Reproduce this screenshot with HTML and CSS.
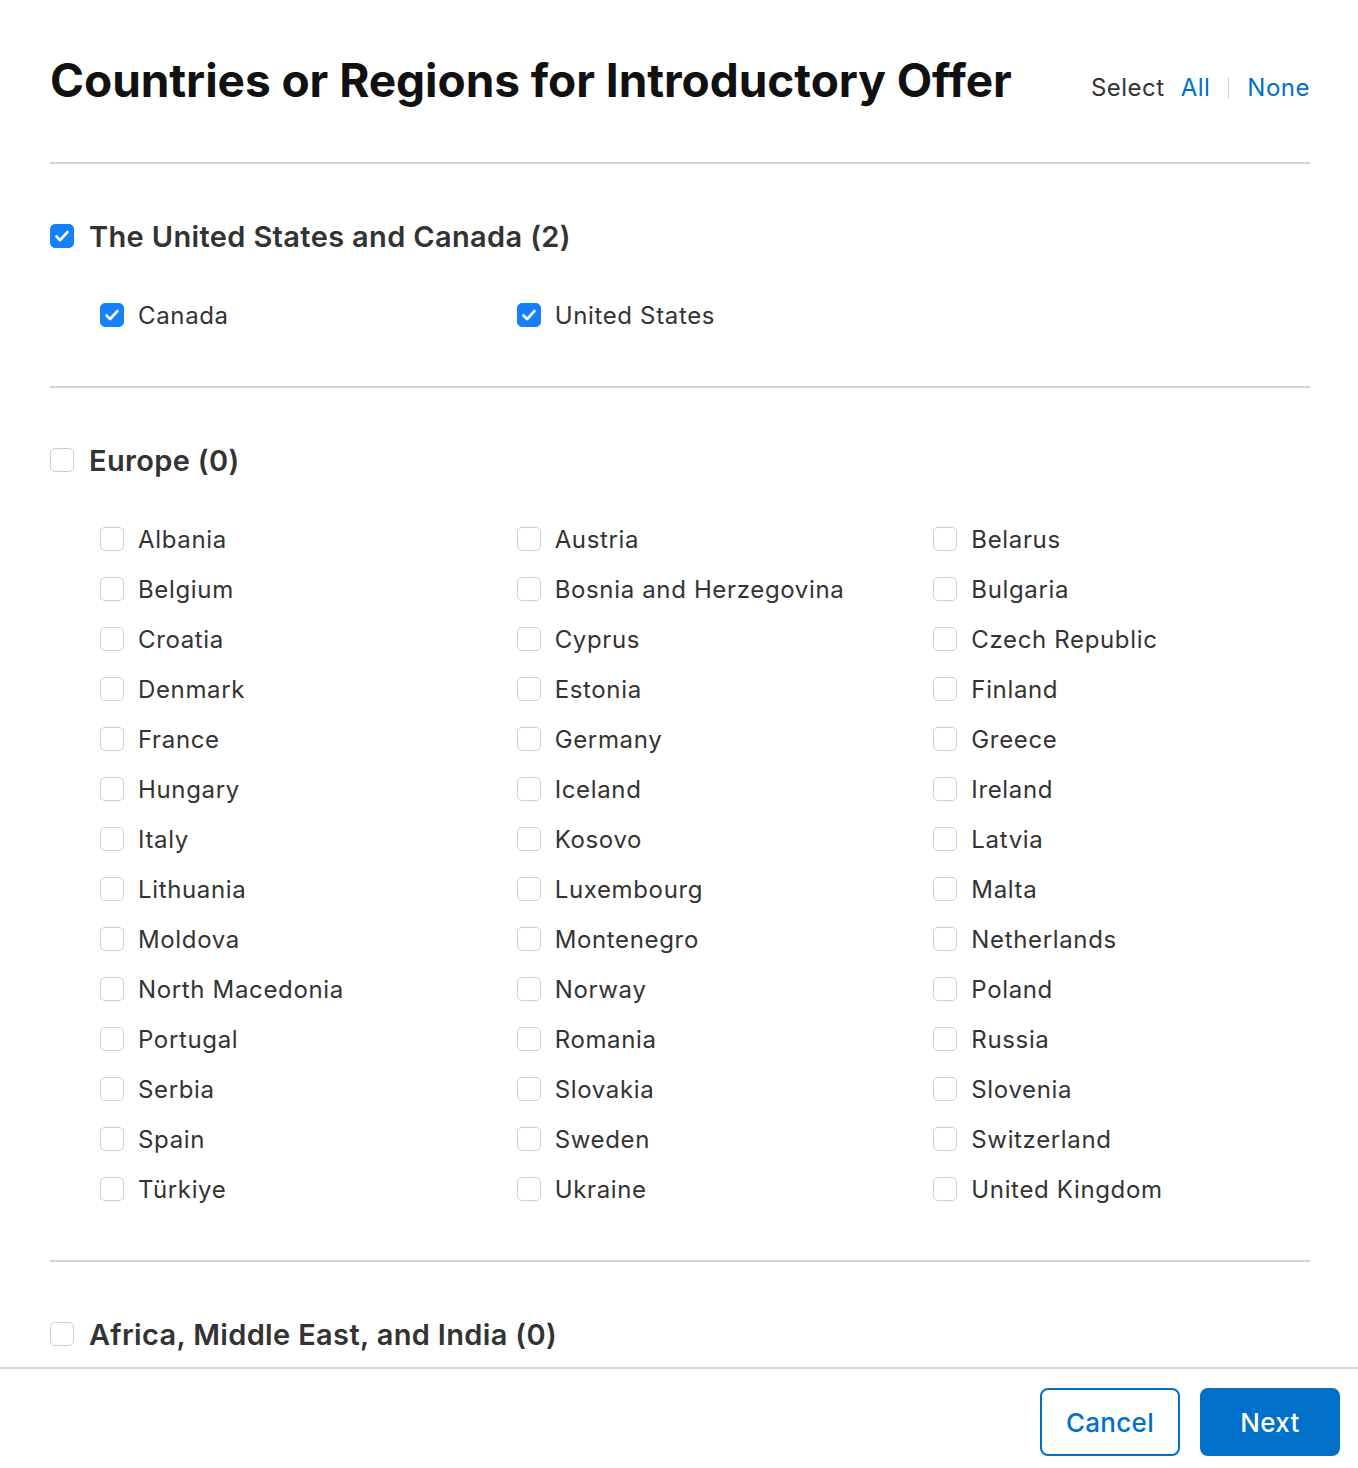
FILE: index.html
```html
<!DOCTYPE html>
<html>
<head>
<meta charset="utf-8">
<link rel="stylesheet" href="styles.css">
</head>
<body>
<div class="modal">
  <div class="scroll">
    <header class="head">
      <h1 class="title">Countries or Regions for Introductory Offer</h1>
      <div class="select">
        <span class="select-label">Select</span>
        <a class="link">All</a>
        <span class="sep"></span>
        <a class="link">None</a>
      </div>
    </header>

    <section class="group">
      <label class="group-head"><span class="cb on"><svg viewBox="0 0 24 24"><path d="M6 12.6l3.9 3.9 8-8.8" fill="none" stroke="#fff" stroke-width="3" stroke-linecap="round" stroke-linejoin="round"/></svg></span>The United States and Canada (2)</label>
      <div class="items">
        <label class="item"><span class="cb on"><svg viewBox="0 0 24 24"><path d="M6 12.6l3.9 3.9 8-8.8" fill="none" stroke="#fff" stroke-width="3" stroke-linecap="round" stroke-linejoin="round"/></svg></span>Canada</label>
        <label class="item"><span class="cb on"><svg viewBox="0 0 24 24"><path d="M6 12.6l3.9 3.9 8-8.8" fill="none" stroke="#fff" stroke-width="3" stroke-linecap="round" stroke-linejoin="round"/></svg></span>United States</label>
      </div>
    </section>

    <section class="group">
      <label class="group-head"><span class="cb"></span>Europe (0)</label>
      <div class="items">
        <label class="item"><span class="cb"></span>Albania</label>
        <label class="item"><span class="cb"></span>Austria</label>
        <label class="item"><span class="cb"></span>Belarus</label>
        <label class="item"><span class="cb"></span>Belgium</label>
        <label class="item"><span class="cb"></span>Bosnia and Herzegovina</label>
        <label class="item"><span class="cb"></span>Bulgaria</label>
        <label class="item"><span class="cb"></span>Croatia</label>
        <label class="item"><span class="cb"></span>Cyprus</label>
        <label class="item"><span class="cb"></span>Czech Republic</label>
        <label class="item"><span class="cb"></span>Denmark</label>
        <label class="item"><span class="cb"></span>Estonia</label>
        <label class="item"><span class="cb"></span>Finland</label>
        <label class="item"><span class="cb"></span>France</label>
        <label class="item"><span class="cb"></span>Germany</label>
        <label class="item"><span class="cb"></span>Greece</label>
        <label class="item"><span class="cb"></span>Hungary</label>
        <label class="item"><span class="cb"></span>Iceland</label>
        <label class="item"><span class="cb"></span>Ireland</label>
        <label class="item"><span class="cb"></span>Italy</label>
        <label class="item"><span class="cb"></span>Kosovo</label>
        <label class="item"><span class="cb"></span>Latvia</label>
        <label class="item"><span class="cb"></span>Lithuania</label>
        <label class="item"><span class="cb"></span>Luxembourg</label>
        <label class="item"><span class="cb"></span>Malta</label>
        <label class="item"><span class="cb"></span>Moldova</label>
        <label class="item"><span class="cb"></span>Montenegro</label>
        <label class="item"><span class="cb"></span>Netherlands</label>
        <label class="item"><span class="cb"></span>North Macedonia</label>
        <label class="item"><span class="cb"></span>Norway</label>
        <label class="item"><span class="cb"></span>Poland</label>
        <label class="item"><span class="cb"></span>Portugal</label>
        <label class="item"><span class="cb"></span>Romania</label>
        <label class="item"><span class="cb"></span>Russia</label>
        <label class="item"><span class="cb"></span>Serbia</label>
        <label class="item"><span class="cb"></span>Slovakia</label>
        <label class="item"><span class="cb"></span>Slovenia</label>
        <label class="item"><span class="cb"></span>Spain</label>
        <label class="item"><span class="cb"></span>Sweden</label>
        <label class="item"><span class="cb"></span>Switzerland</label>
        <label class="item"><span class="cb"></span>Türkiye</label>
        <label class="item"><span class="cb"></span>Ukraine</label>
        <label class="item"><span class="cb"></span>United Kingdom</label>
      </div>
    </section>

    <section class="group">
      <label class="group-head"><span class="cb"></span>Africa, Middle East, and India (0)</label>
    </section>
  </div>
  <footer class="foot">
    <button class="btn btn-outline">Cancel</button>
    <button class="btn btn-primary">Next</button>
  </footer>
</div>
</body>
</html>
```
FILE: styles.css
```css
* { box-sizing: border-box; }
html, body { margin: 0; padding: 0; background: #fff; }
body {
  font-family: Inter, "Noto Sans", "Liberation Sans", sans-serif;
  color: #333;
}
.modal {
  width: 1358px;
  height: 1468px;
  display: flex;
  flex-direction: column;
}
.scroll {
  flex: 1;
  overflow: hidden;
  padding: 0 48px 0 50px;
}
.head {
  display: flex;
  justify-content: space-between;
  align-items: baseline;
  padding: 50px 0 52px;
  border-bottom: 2px solid #d6d6d6;
}
.title {
  margin: 0;
  font-size: 46px;
  line-height: 60px;
  font-weight: 700;
  color: #111;
  letter-spacing: -0.05px;
}
.select {
  display: flex;
  align-items: baseline;
  font-size: 24px;
  letter-spacing: 0.5px;
  color: #333;
  position: relative;
  top: -1px;
}
.select-label { margin-right: 16px; }
.link { color: #0070c9; text-decoration: none; }
.sep {
  display: inline-block;
  width: 1px;
  height: 22px;
  background: #d0d0d0;
  margin: 0 18px;
  align-self: center;
}
.group {
  padding: 52px 0 46px;
  border-bottom: 2px solid #d6d6d6;
}
.group-head {
  display: flex;
  align-items: center;
  height: 40px;
  font-size: 29px;
  font-weight: 600;
  letter-spacing: 0.35px;
  color: #333;
  gap: 15px;
}
.items {
  margin-top: 34px;
  margin-left: 50px;
  display: grid;
  grid-template-columns: repeat(3, 416.67px);
  grid-auto-rows: 50px;
}
.item {
  display: flex;
  align-items: center;
  gap: 14px;
  font-size: 24px;
  letter-spacing: 0.65px;
  color: #333;
}
.cb {
  flex: none;
  width: 24px;
  height: 24px;
  border: 1px solid #cfcfcf;
  border-radius: 5px;
  background: #fff;
  display: flex;
  align-items: center;
  justify-content: center;
}
.cb.on {
  background: #1580f8;
  border-color: #1580f8;
}
.cb svg { width: 24px; height: 24px; }
.foot {
  flex: none;
  height: 101px;
  border-top: 2px solid #d6d6d6;
  display: flex;
  justify-content: flex-end;
  align-items: flex-start;
  padding: 19px 18px 0 0;
  gap: 20px;
}
.btn {
  width: 140px;
  height: 68px;
  border-radius: 8px;
  font-family: inherit;
  font-size: 26px;
  font-weight: 500;
  letter-spacing: 0.3px;
  cursor: pointer;
}
.btn-outline {
  background: #fff;
  border: 2px solid #0070c9;
  color: #0070c9;
}
.btn-primary {
  background: #0070c9;
  border: 2px solid #0070c9;
  color: #fff;
}
```
